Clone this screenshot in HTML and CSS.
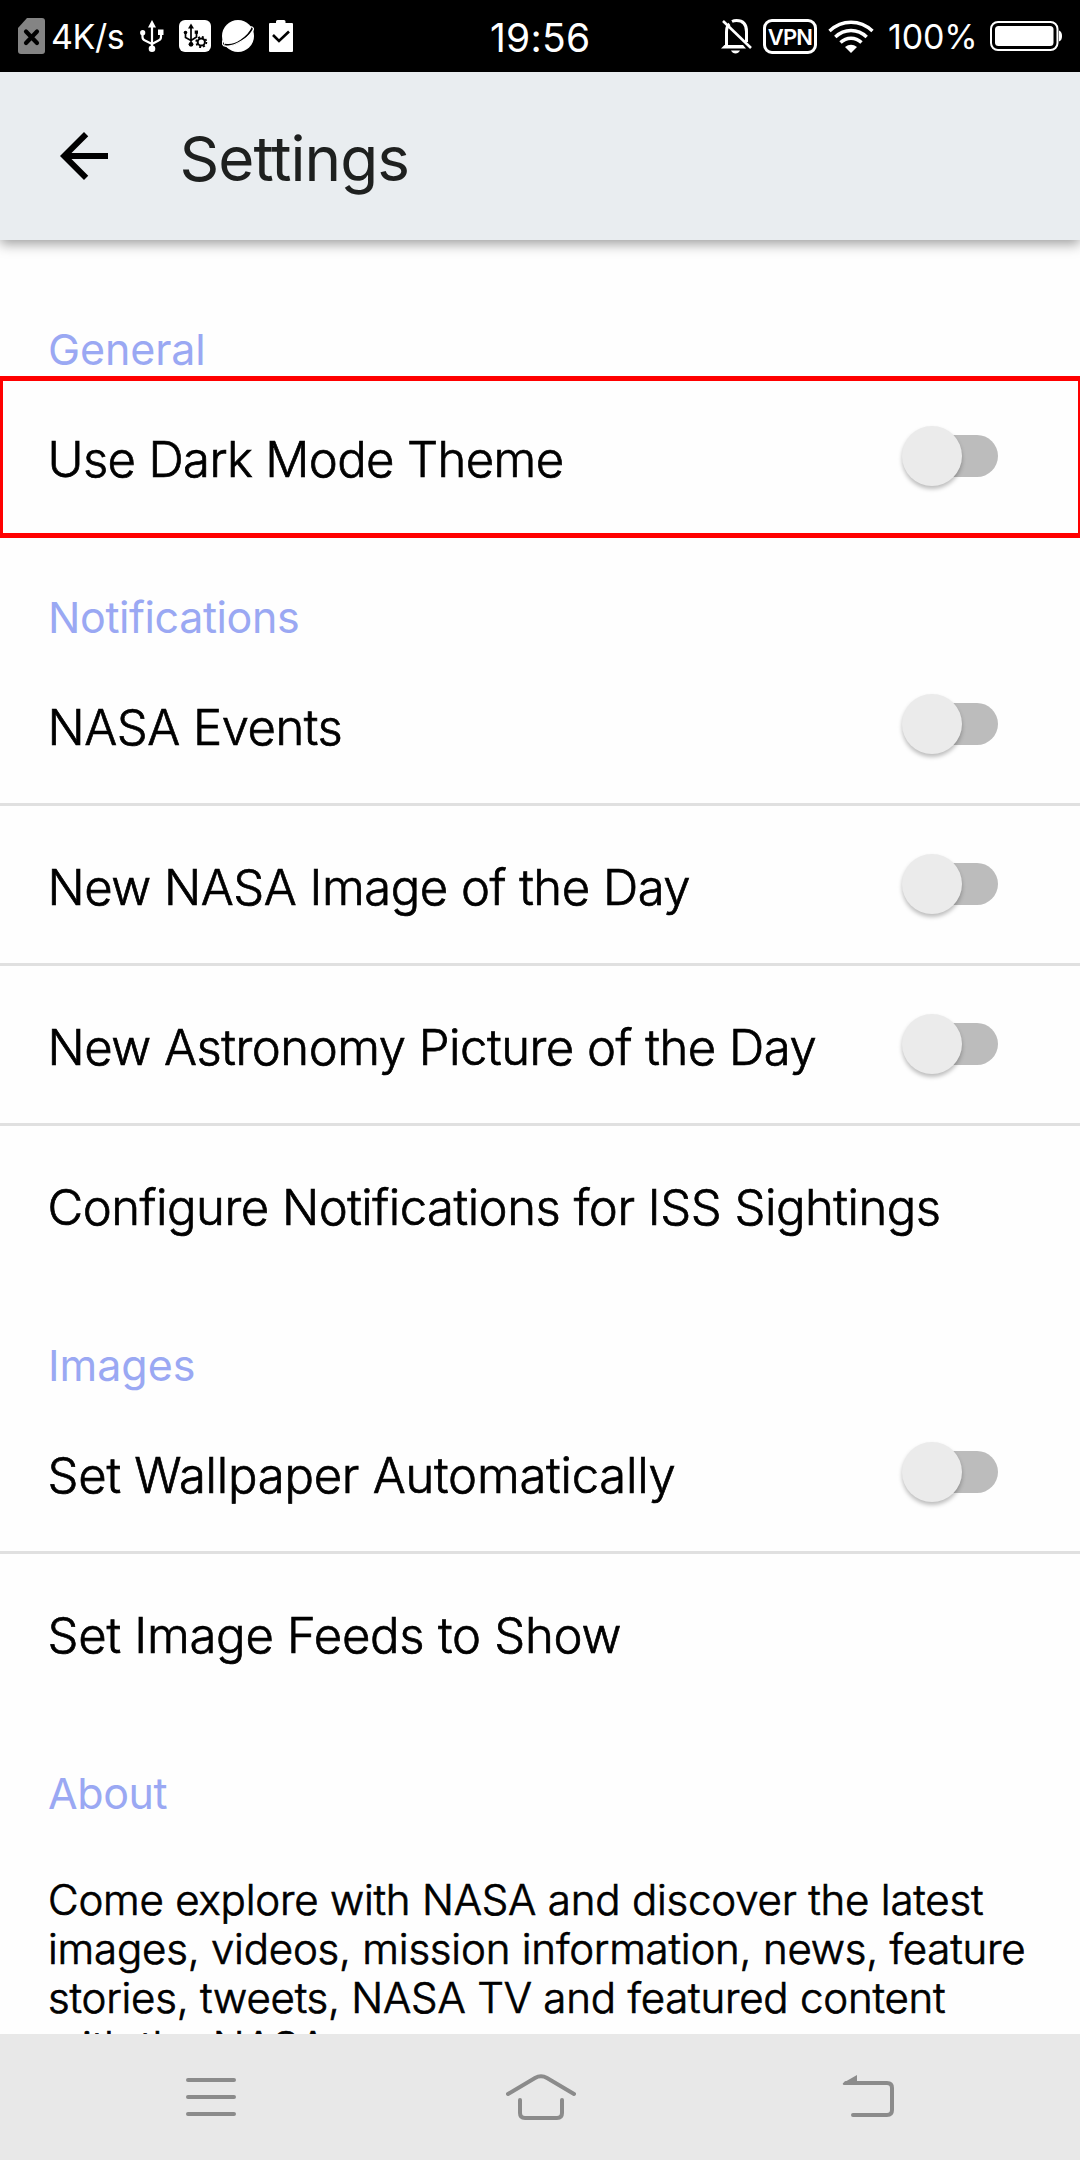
FILE: index.html
```html
<!DOCTYPE html>
<html lang="en">
<head>
<meta charset="utf-8">
<title>Settings</title>
<link rel="stylesheet" href="styles.css">
</head>
<body>
<div class="screen">
  <div class="status">
    <div class="status-left">
      <svg width="27" height="36" viewBox="0 0 27 36"><path d="M9 0h15q3 0 3 3v30q0 3-3 3H3q-3 0-3-3V10z" fill="#848484"/><path d="M8 13.500l11 11.500M19 13.500L8 25" stroke="#000" stroke-width="4.200" stroke-linecap="round"/></svg>
      <span class="speed">4K/s</span>
      <svg class="usb" width="24" height="32" viewBox="0 0 24 32" fill="none" stroke="#fff" stroke-width="2.200"><path d="M12 5v23M2.500 14v3q0 2.500 2.500 3.500l7 3.500M21 13v4q0 2.500-2.500 3.500L12 24"/><path d="M12 0l4 7.500H8z" fill="#fff" stroke="none"/><circle cx="2.700" cy="12.700" r="2.600" fill="#fff" stroke="none"/><path d="M18 9.500h5.500V15H18z" fill="#fff" stroke="none"/><circle cx="12" cy="28.700" r="3.300" fill="#fff" stroke="none"/></svg>
      <svg class="usb-box" width="32" height="32" viewBox="0 0 32 32" fill="none" stroke="#000" stroke-width="1.700"><rect width="32" height="32" rx="6" fill="#fff" stroke="none"/><path d="M12 6v18M6.500 13v4.500L12 20.500M17.500 12v5L12 20.500"/><path d="M12 3.500l3 5H9z" fill="#000" stroke="none"/><circle cx="6.500" cy="12.500" r="1.800" fill="#000" stroke="none"/><path d="M15.700 10.500h3.300v3.300h-3.300z" fill="#000" stroke="none"/><circle cx="12" cy="24.300" r="2.400" fill="#000" stroke="none"/><circle cx="22.300" cy="22" r="3.600" stroke-width="2"/><circle cx="22.300" cy="22" r="5.100" stroke-width="1.700" stroke-dasharray="2 2"/></svg>
      <svg class="planet" width="32" height="32" viewBox="0 0 32 32"><circle cx="16" cy="16" r="16" fill="#fff"/><path d="M3 24.500Q10 26.500 19 20.500 28 14 30.500 7.500" fill="none" stroke="#000" stroke-width="1.800"/><path d="M2 19C-.5 22-.5 26 4 26.300 14 26.500 31 15 31.500 9q0-2-3-2.500" fill="none" stroke="#fff" stroke-width="1.200"/></svg>
      <svg class="clip" width="24" height="32" viewBox="0 0 24 32"><path d="M1 3h6V1.500Q7 0 8.500 0h6.500q1.500 0 1.500 1.500V3H23q1 0 1 1v27q0 1-1 1H1q-1 0-1-1V4q0-1 1-1z" fill="#fff"/><path d="M4 15l6 6 10-9.500" fill="none" stroke="#000" stroke-width="2.600"/></svg>
    </div>
    <div class="clock">19:56</div>
    <div class="status-right">
      <svg width="31" height="36" viewBox="0 0 31 36" fill="none" stroke="#fff"><path d="M5.500 28V14Q5.500 8.500 8.500 6M11 3.500Q13 2.500 15.500 2.500q10 0 10 11V24" stroke-width="3"/><path d="M2 3l28 27" stroke-width="2.600"/><path d="M0 30.500L3.500 27H22l3 3.500z" fill="#fff" stroke="none"/><path d="M10 32.500h9q-1.500 3-4.500 3t-4.500-3z" fill="#fff" stroke="none"/></svg>
      <span class="vpn">VPN</span>
      <svg class="wifi" width="46" height="33" viewBox="0 0 46 33" fill="none" stroke="#fff" stroke-width="3.400"><path d="M1.500 11Q11 2.300 23 2.300T44.500 11M7.300 17Q14 10.500 23 10.500T38.700 17M12.500 22.500Q17 18.200 23 18.200t10.500 4.300"/><path d="M17 27q6-4.500 12 0l-6 6z" fill="#fff" stroke="none"/></svg>
      <span class="percent">100%</span>
      <svg class="battery" width="73" height="30" viewBox="0 0 73 30"><rect x="1" y="1" width="66.500" height="28" rx="7" fill="none" stroke="#fff" stroke-width="2"/><rect x="5" y="5" width="58.500" height="20" rx="3.500" fill="#fff"/><path d="M69 9.500q3 1 3 5.500t-3 5.500z" fill="#fff"/></svg>
    </div>
  </div>
  <header class="appbar">
    <svg width="72" height="72" viewBox="0 0 24 24"><path d="M20 11H7.830l5.590-5.590L12 4l-8 8 8 8 1.410-1.410L7.830 13H20z"/></svg>
    <h1>Settings</h1>
  </header>
  <main class="content">
    <h2 class="first">General</h2>
    <div class="row last marked"><span class="tight">Use Dark Mode Theme</span><i class="toggle"></i></div>
    <h2>Notifications</h2>
    <div class="row"><span>NASA Events</span><i class="toggle"></i></div>
    <div class="row"><span>New NASA Image of the Day</span><i class="toggle"></i></div>
    <div class="row"><span>New Astronomy Picture of the Day</span><i class="toggle"></i></div>
    <div class="row last"><span>Configure Notifications for ISS Sightings</span></div>
    <h2 class="loose">Images</h2>
    <div class="row"><span class="loose">Set Wallpaper Automatically</span><i class="toggle"></i></div>
    <div class="row last"><span class="loose">Set Image Feeds to Show</span></div>
    <h2>About</h2>
    <p class="about">Come explore with NASA and discover the latest<br>images, videos, mission information, news, feature<br>stories, tweets, NASA TV and featured content<br>with the NASA app.</p>
  </main>
  <nav class="navbar">
    <svg width="50" height="40" viewBox="0 0 50 40"><path d="M2 3h46M2 20h46M2 37h46"/></svg>
    <svg width="70" height="46" viewBox="0 0 70 46"><path d="M2 20L29 4q6-3.500 12 0l27 16M14 26v13q0 5 5 5h32q5 0 5-5V26"/></svg>
    <svg width="52" height="46" viewBox="0 0 52 46"><path d="M4 9h41q5 0 5 5v22q0 5-5 5H11"/><path class="tip" d="M1 9L15 1v10H3q-3 0-2-2z"/></svg>
  </nav>
</div>
</body>
</html>
```
FILE: styles.css
```css
* { box-sizing: border-box; }
body { margin: 0; background: #fff; font-family: Inter, "Liberation Sans", sans-serif; }
svg { display: block; flex: none; }
.screen { display: flex; flex-direction: column; width: 1080px; height: 2160px; overflow: hidden; background: #fefefe; }

.status { display: grid; grid-template-columns: 490px 1fr 361px; height: 72px; background: #000; color: #fff; align-items: center; }
.status-left, .status-right { display: flex; align-items: center; }
.status-left { padding-left: 18px; }
.speed { width: 95px; padding-left: 6px; font-size: 34px; letter-spacing: -.4px; line-height: 40px; padding-top: 2px; }
.usb-box { margin-left: 15px; }
.planet { margin-left: 11px; }
.clip { margin-left: 15px; }
.clock { font-size: 39px; letter-spacing: .25px; line-height: 48px; padding: 3px 0 0; }
.status-right { padding-left: 2px; }
.vpn { display: flex; align-items: center; justify-content: center; width: 54px; height: 35px; margin-left: 11px; padding-top: 1px; border: 3px solid #fff; border-radius: 9px; font-size: 22px; font-weight: 600; letter-spacing: -.8px; }
.wifi { margin-left: 11px; }
.percent { width: 102px; padding: 2px 0 0 14px; font-size: 34px; letter-spacing: -.2px; line-height: 40px; }
.battery { margin-left: 14px; }

.appbar { position: relative; display: flex; align-items: center; height: 168px; flex: none; padding-left: 48px; background: #e9edf0; box-shadow: 0 4px 12px rgba(0, 0, 0, .38); }
.appbar h1 { margin: 0 0 0 59.500px; padding-top: 6px; color: #1e201f; font-size: 62px; font-weight: 400; letter-spacing: -1px; line-height: 74px; }

.content { flex: 1; min-height: 0; overflow: hidden; }
h2 { height: 111px; margin: 0; padding: 56px 48px 0; color: #9aa8f3; font-size: 43px; font-weight: 400; letter-spacing: -.4px; line-height: 52px; }
h2.first { height: 138px; padding-top: 83px; letter-spacing: -.1px; }
h2.loose { letter-spacing: 0; }
.row { display: flex; align-items: center; justify-content: space-between; height: 160px; padding: 0 82px 0 47.500px; border-bottom: 3px solid #e0e0e0; }
.row span { padding-top: 7px; font-size: 49px; font-weight: 300; letter-spacing: -.48px; line-height: 60px; white-space: nowrap; -webkit-text-stroke: .7px #000; }
.row .tight { letter-spacing: -.63px; }
.row .loose { letter-spacing: -.24px; }
.row.last { height: 157px; border-bottom: 0; }
.marked { position: relative; }
.marked::after { content: ""; position: absolute; inset: -2px 0 -3px; border: solid #f00; border-width: 5px 2px 5px 3px; }
.toggle { display: flex; align-items: center; justify-content: flex-start; width: 84px; height: 42px; margin-bottom: 1px; border-radius: 21px; background: #bcbcbc; }
.toggle::before { content: ""; width: 60px; height: 60px; margin-left: -12px; flex: none; border-radius: 50%; background: #ebebeb; box-shadow: 0 3px 4px rgba(0, 0, 0, .26); }
.about { margin: 0; padding: 53px 0 0 48px; font-size: 42px; font-weight: 300; letter-spacing: -.2px; line-height: 49px; white-space: nowrap; -webkit-text-stroke: .7px #000; }

.navbar { display: flex; align-items: flex-start; height: 126px; flex: none; padding-left: 186px; background: #e8e8e8; }
.navbar svg { margin-top: 40px; fill: none; stroke: #8b8b8b; stroke-width: 4; stroke-linecap: round; }
.navbar svg:first-child { margin-top: 43px; }
.navbar svg:nth-child(2) { margin-left: 270px; }
.navbar svg:nth-child(3) { margin-left: 266px; }
.navbar .tip { fill: #8b8b8b; stroke: none; }
```
